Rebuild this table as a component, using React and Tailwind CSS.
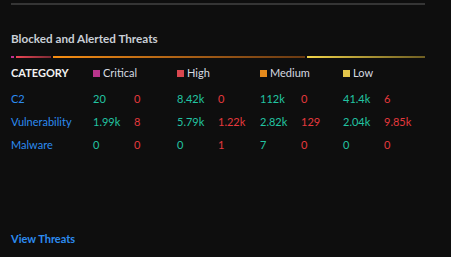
import React from "react"

const rows = [
    { name: "C2", values: ["20", "0", "8.42k", "0", "112k", "0", "41.4k", "6"] },
    { name: "Vulnerability", values: ["1.99k", "8", "5.79k", "1.22k", "2.82k", "129", "2.04k", "9.85k"] },
    { name: "Malware", values: ["0", "0", "0", "1", "7", "0", "0", "0"] },
]

const legend = [
    { label: "Critical", color: "bg-[#b8358c]" },
    { label: "High", color: "bg-[#d9474f]" },
    { label: "Medium", color: "bg-[#e58a1c]" },
    { label: "Low", color: "bg-[#e2c54a]" },
]

const cols = "grid grid-cols-[82px_41px_43px_41px_42px_41px_42px_41px_1fr]"

export default function App() {
    return (
        <div className="w-[451px] h-[257px] bg-[#0e0e0e] pl-[11px] pr-[26px] pt-[3px] pb-[10px] flex flex-col font-['Lato',sans-serif]">
            {/* line at the top */}
            <div className="h-[2px] bg-[#353535]" />

            <h2 className="mt-[25px] text-[11.7px] leading-[16px] font-bold text-[#c9ced6]">
                Blocked and Alerted Threats
            </h2>

            {/* severity split bar */}
            <div className="mt-[10px] flex gap-[2px] h-[2px]">
                <div className="w-[3px] bg-[#c0308f]" />
                <div className="w-[35px] bg-gradient-to-r from-[#ef4655] to-[#7c2a34]" />
                <div className="w-[252px] bg-gradient-to-r from-[#f78e12] to-[#6a3a12]" />
                <div className="w-[118px] bg-gradient-to-r from-[#f3d54a] to-[#6e5e22]" />
            </div>

            {/* table */}
            <div className="mt-[7px] text-[11px] leading-[16px]">
                <div className={`${cols} h-[22px] items-start`}>
                    <span className="font-bold text-[#f2f2f2]">CATEGORY</span>
                    {legend.map((l) => (
                        <span key={l.label} className="col-span-2 flex items-center gap-[3px] text-[#d6dae0]">
                            <span className={`w-[7px] h-[7px] ${l.color}`} />
                            {l.label}
                        </span>
                    ))}
                </div>
                {rows.map((r) => (
                    <div key={r.name} className={`${cols} h-[23px] items-center`}>
                        <span className="text-[#2c8bf0]">{r.name}</span>
                        {r.values.map((v, i) => (
                            <span key={i} className={i % 2 === 0 ? "text-[#22c4a2]" : "text-[#e5393d]"}>
                                {v}
                            </span>
                        ))}
                    </div>
                ))}
            </div>

            <a href="#" className="mt-auto text-[11px] leading-[16px] font-bold text-[#2c8bf0]">
                View Threats
            </a>
        </div>
    )
}
